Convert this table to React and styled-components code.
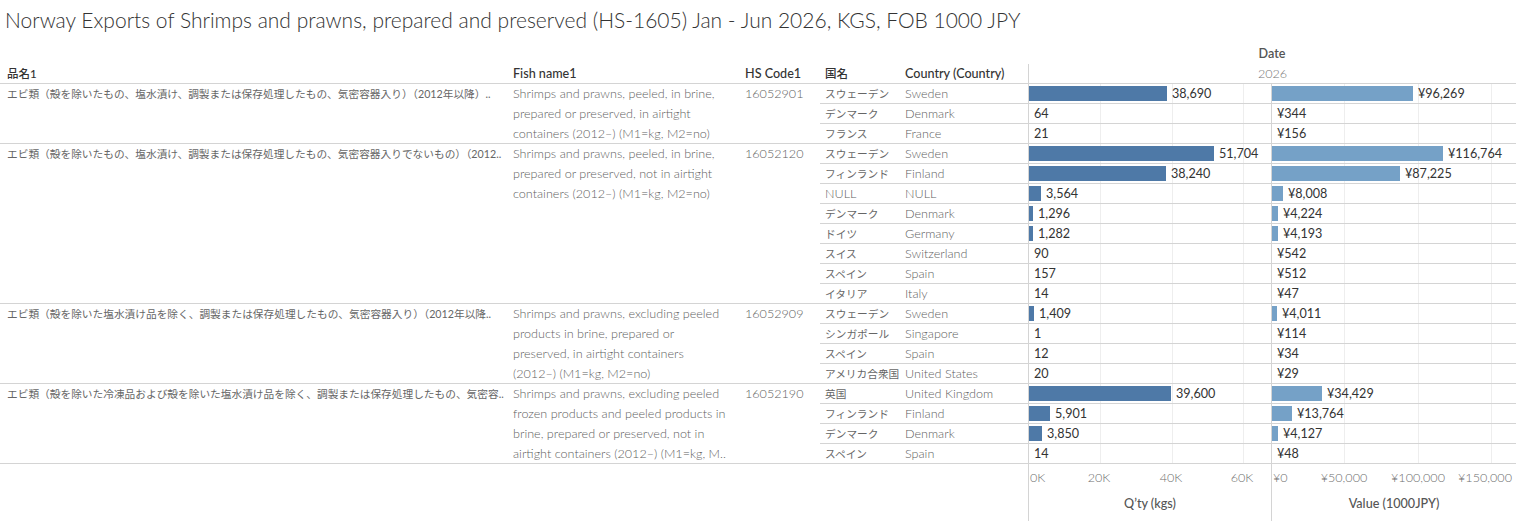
import React from "react"
import styled, { createGlobalStyle } from "styled-components"

const GlobalStyle = createGlobalStyle`
    * { box-sizing: border-box; }
    body {
        margin: 0;
        background: #fff;
        color: #333;
        font-family: Lato, "Noto Sans CJK JP", sans-serif;
    }
`

// px per unit, read off the axis gridlines
const QTY_SCALE = 71.8 / 20000
const VAL_SCALE = 73.4 / 50000

const COLS = "508px 232px 80px 80px 128px 243px 245px"
const LINE = "#d4d4d4"
const TEXT = "12.6px"
const JP_TEXT = "10.7px"

const groups = [
    {
        name: "エビ類（殻を除いたもの、塩水漬け、調製または保存処理したもの、気密容器入り）（2012年以降）..",
        fish: [
            "Shrimps and prawns, peeled, in brine,",
            "prepared or preserved, in airtight",
            "containers (2012–) (M1=kg, M2=no)",
        ],
        code: "16052901",
        rows: [
            ["スウェーデン", "Sweden", 38690, 96269],
            ["デンマーク", "Denmark", 64, 344],
            ["フランス", "France", 21, 156],
        ],
    },
    {
        name: "エビ類（殻を除いたもの、塩水漬け、調製または保存処理したもの、気密容器入りでないもの）（2012..",
        fish: [
            "Shrimps and prawns, peeled, in brine,",
            "prepared or preserved, not in airtight",
            "containers (2012–) (M1=kg, M2=no)",
        ],
        code: "16052120",
        rows: [
            ["スウェーデン", "Sweden", 51704, 116764],
            ["フィンランド", "Finland", 38240, 87225],
            ["NULL", "NULL", 3564, 8008],
            ["デンマーク", "Denmark", 1296, 4224],
            ["ドイツ", "Germany", 1282, 4193],
            ["スイス", "Switzerland", 90, 542],
            ["スペイン", "Spain", 157, 512],
            ["イタリア", "Italy", 14, 47],
        ],
    },
    {
        name: "エビ類（殻を除いた塩水漬け品を除く、調製または保存処理したもの、気密容器入り）（2012年以降..",
        fish: [
            "Shrimps and prawns, excluding peeled",
            "products in brine, prepared or",
            "preserved, in airtight containers",
            "(2012–) (M1=kg, M2=no)",
        ],
        code: "16052909",
        rows: [
            ["スウェーデン", "Sweden", 1409, 4011],
            ["シンガポール", "Singapore", 1, 114],
            ["スペイン", "Spain", 12, 34],
            ["アメリカ合衆国", "United States", 20, 29],
        ],
    },
    {
        name: "エビ類（殻を除いた冷凍品および殻を除いた塩水漬け品を除く、調製または保存処理したもの、気密容..",
        fish: [
            "Shrimps and prawns, excluding peeled",
            "frozen products and peeled products in",
            "brine, prepared or preserved, not in",
            "airtight containers (2012–) (M1=kg, M..",
        ],
        code: "16052190",
        rows: [
            ["英国", "United Kingdom", 39600, 34429],
            ["フィンランド", "Finland", 5901, 13764],
            ["デンマーク", "Denmark", 3850, 4127],
            ["スペイン", "Spain", 14, 48],
        ],
    },
]

const qtyTicks = [
    { label: "0K", left: 1, start: true },
    { label: "20K", left: 70 },
    { label: "40K", left: 142 },
    { label: "60K", left: 213 },
]

const valTicks = [
    { label: "¥0", left: 1, start: true },
    { label: "¥50,000", left: 72 },
    { label: "¥100,000", left: 146 },
    { label: "¥150,000", left: 213 },
]

const fmt = n => n.toLocaleString("en-US")
const isAscii = s => /^[\x20-\x7e]+$/.test(s)

const Page = styled.div`
    width: 1516px;
    height: 521px;
    overflow: hidden;
`

const Title = styled.div`
    height: 44px;
    padding-left: 5px;
    line-height: 40px;
    font-size: 21px;
    font-weight: 300;
    color: #333;
    white-space: nowrap;
`

const Row = styled.div`
    display: grid;
    grid-template-columns: ${COLS};
    height: ${props => props.height || 20}px;
    border-bottom: ${props => (props.ruled ? `1px solid ${LINE}` : "none")};
`

const DateLabel = styled.div`
    grid-column: 6 / span 2;
    text-align: center;
    font-size: ${TEXT};
    font-weight: 600;
    color: #555;
    line-height: 20px;
`

const HeadCell = styled.div`
    padding-left: ${props => (props.first ? 7 : 5)}px;
    font-size: ${props => (props.jp ? "11.5px" : TEXT)};
    font-weight: 500;
    color: #333;
    line-height: 19px;
    white-space: nowrap;
`

const YearCell = styled.div`
    grid-column: 6 / span 2;
    border-left: 1px solid ${LINE};
    text-align: center;
    font-size: ${TEXT};
    font-weight: 300;
    color: #777;
    line-height: 19px;
`

const Group = styled.div`
    display: grid;
    grid-template-columns: 508px 232px 80px 696px;
`

// Latin cell text is thin and grey, the Japanese one a touch darker
const GroupCell = styled.div`
    border-bottom: 1px solid ${LINE};
    padding-left: ${props => (props.first ? 7 : 5)}px;
    font-size: ${props => (props.jp ? JP_TEXT : TEXT)};
    font-weight: ${props => (props.jp ? 400 : 300)};
    line-height: 19px;
    color: ${props => (props.jp ? "#666" : "#5f5f5f")};
    white-space: nowrap;
    overflow: hidden;
`

const FishLine = styled.div`
    height: 20px;
    line-height: 19px;

    &:last-child {
        height: 19px;
    }
`

const SubRows = styled.div`
    display: flex;
    flex-direction: column;
`

const SubRow = styled.div`
    display: grid;
    grid-template-columns: 80px 128px 243px 245px;
    height: 20px;
    border-bottom: 1px solid ${LINE};
`

const NameCell = styled.div`
    padding-left: 5px;
    font-size: ${props => (props.jp ? JP_TEXT : TEXT)};
    font-weight: ${props => (props.jp ? 400 : 300)};
    line-height: 19px;
    color: ${props => (props.jp ? "#666" : "#5f5f5f")};
    white-space: nowrap;
    overflow: hidden;
`

const Pane = styled.div`
    display: flex;
    align-items: center;
    border-left: 1px solid ${LINE};
    background-image: repeating-linear-gradient(
        to right,
        transparent 0,
        transparent ${props => props.step - 1}px,
        #eeeeee ${props => props.step - 1}px,
        #eeeeee ${props => props.step}px
    );
`

const Bar = styled.div`
    height: 15px;
    flex-shrink: 0;
    background: ${props => props.color};
`

const BarLabel = styled.span`
    margin-left: 5px;
    font-size: ${TEXT};
    color: #333;
    white-space: nowrap;
`

const AxisPane = styled.div`
    display: flex;
    flex-direction: column;
    border-left: 1px solid ${LINE};
`

const Ticks = styled.div`
    position: relative;
    height: 30px;
`

const Tick = styled.span`
    position: absolute;
    top: 6px;
    left: ${props => props.left}px;
    transform: ${props => (props.start ? "none" : "translateX(-50%)")};
    font-size: ${TEXT};
    font-weight: 300;
    color: #6f6f6f;
    white-space: nowrap;
`

const AxisTitle = styled.div`
    text-align: center;
    font-size: ${TEXT};
    font-weight: 500;
    color: #555;
    line-height: 20px;
`

const BarCell = ({ value, scale, color, prefix = "" }) => (
    <>
        <Bar color={color} style={{ width: Math.floor(value * scale) }} />
        <BarLabel>
            {prefix}
            {fmt(value)}
        </BarLabel>
    </>
)

const Axis = ({ ticks, title }) => (
    <AxisPane>
        <Ticks>
            {ticks.map(t => (
                <Tick key={t.label} left={t.left} start={t.start}>
                    {t.label}
                </Tick>
            ))}
        </Ticks>
        <AxisTitle>{title}</AxisTitle>
    </AxisPane>
)

const App = () => (
    <Page>
        <GlobalStyle />
        <Title>
            Norway Exports of Shrimps and prawns, prepared and preserved
            (HS-1605) Jan - Jun 2026, KGS, FOB 1000 JPY
        </Title>
        <Row>
            <DateLabel>Date</DateLabel>
        </Row>
        <Row ruled>
            <HeadCell first jp>
                品名1
            </HeadCell>
            <HeadCell>Fish name1</HeadCell>
            <HeadCell>HS Code1</HeadCell>
            <HeadCell jp>国名</HeadCell>
            <HeadCell>Country (Country)</HeadCell>
            <YearCell>2026</YearCell>
        </Row>
        {groups.map(g => (
            <Group key={g.code}>
                <GroupCell first jp>
                    {g.name}
                </GroupCell>
                <GroupCell>
                    {g.fish.map(line => (
                        <FishLine key={line}>{line}</FishLine>
                    ))}
                </GroupCell>
                <GroupCell>{g.code}</GroupCell>
                <SubRows>
                    {g.rows.map(([jp, en, qty, val]) => (
                        <SubRow key={en}>
                            <NameCell jp={!isAscii(jp)}>{jp}</NameCell>
                            <NameCell>{en}</NameCell>
                            <Pane step={71.8}>
                                <BarCell
                                    value={qty}
                                    scale={QTY_SCALE}
                                    color="#4e79a7"
                                />
                            </Pane>
                            <Pane step={73.4}>
                                <BarCell
                                    value={val}
                                    scale={VAL_SCALE}
                                    color="#75a1c7"
                                    prefix="¥"
                                />
                            </Pane>
                        </SubRow>
                    ))}
                </SubRows>
            </Group>
        ))}
        <Row height={57}>
            <div />
            <div />
            <div />
            <div />
            <div />
            <Axis ticks={qtyTicks} title="Q’ty (kgs)" />
            <Axis ticks={valTicks} title="Value (1000JPY)" />
        </Row>
    </Page>
)

export default App
